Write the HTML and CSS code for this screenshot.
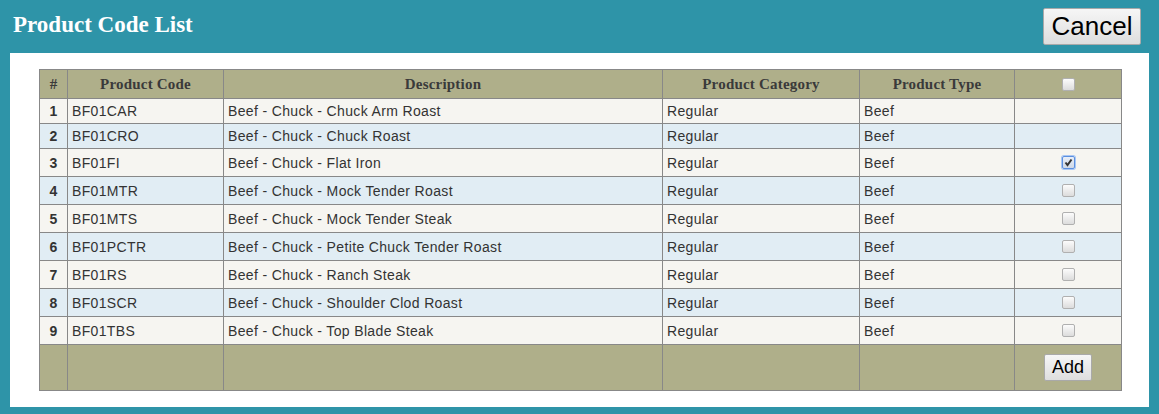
FILE: index.html
```html
<!DOCTYPE html>
<html>
<head>
<meta charset="utf-8">
<link rel="stylesheet" href="styles.css">
</head>
<body>
<div class="topbar">
  <h1 class="title">Product Code List</h1>
  <button class="btn btn-cancel">Cancel</button>
</div>
<div class="panel">
  <table class="grid">
    <colgroup>
      <col class="c-num"><col class="c-code"><col class="c-desc"><col class="c-cat"><col class="c-type"><col class="c-chk">
    </colgroup>
    <thead>
      <tr>
        <th>#</th><th>Product Code</th><th>Description</th><th>Product Category</th><th>Product Type</th><th class="chk"><span class="cb"></span></th>
      </tr>
    </thead>
    <tbody>
      <tr class="odd short"><td class="num">1</td><td>BF01CAR</td><td>Beef - Chuck - Chuck Arm Roast</td><td>Regular</td><td>Beef</td><td></td></tr>
      <tr class="even short"><td class="num">2</td><td>BF01CRO</td><td>Beef - Chuck - Chuck Roast</td><td>Regular</td><td>Beef</td><td></td></tr>
      <tr class="odd"><td class="num">3</td><td>BF01FI</td><td>Beef - Chuck - Flat Iron</td><td>Regular</td><td>Beef</td><td class="chk"><span class="cb checked"><svg viewBox="0 0 13 13" width="13" height="13"><path d="M3.5 6.5 L5.5 9 L9.5 3.5" fill="none" stroke="#333" stroke-width="2"/></svg></span></td></tr>
      <tr class="even"><td class="num">4</td><td>BF01MTR</td><td>Beef - Chuck - Mock Tender Roast</td><td>Regular</td><td>Beef</td><td class="chk"><span class="cb"></span></td></tr>
      <tr class="odd"><td class="num">5</td><td>BF01MTS</td><td>Beef - Chuck - Mock Tender Steak</td><td>Regular</td><td>Beef</td><td class="chk"><span class="cb"></span></td></tr>
      <tr class="even"><td class="num">6</td><td>BF01PCTR</td><td>Beef - Chuck - Petite Chuck Tender Roast</td><td>Regular</td><td>Beef</td><td class="chk"><span class="cb"></span></td></tr>
      <tr class="odd"><td class="num">7</td><td>BF01RS</td><td>Beef - Chuck - Ranch Steak</td><td>Regular</td><td>Beef</td><td class="chk"><span class="cb"></span></td></tr>
      <tr class="even"><td class="num">8</td><td>BF01SCR</td><td>Beef - Chuck - Shoulder Clod Roast</td><td>Regular</td><td>Beef</td><td class="chk"><span class="cb"></span></td></tr>
      <tr class="odd"><td class="num">9</td><td>BF01TBS</td><td>Beef - Chuck - Top Blade Steak</td><td>Regular</td><td>Beef</td><td class="chk"><span class="cb"></span></td></tr>
    </tbody>
    <tfoot>
      <tr><td></td><td></td><td></td><td></td><td></td><td class="chk"><button class="btn btn-add">Add</button></td></tr>
    </tfoot>
  </table>
</div>
</body>
</html>
```
FILE: styles.css
```css
html, body {
  margin: 0;
  padding: 0;
}
body {
  background: #2e94a8;
  font-family: "Liberation Sans", Arial, sans-serif;
  height: 414px;
  overflow: hidden;
}
.topbar {
  height: 53px;
  box-sizing: border-box;
  display: flex;
  justify-content: space-between;
  align-items: flex-start;
  padding: 8px 18px 0 13px;
}
.title {
  margin: 0;
  padding-top: 5px;
  font-family: "Liberation Serif", "Times New Roman", serif;
  font-weight: bold;
  font-size: 23px;
  line-height: 24px;
  color: #ffffff;
}
.btn {
  font-family: "Liberation Sans", Arial, sans-serif;
  color: #000;
  background: linear-gradient(#f6f6f6, #dedede);
  border: 1px solid #a9a9a9;
  border-radius: 2px;
  padding: 0;
  margin: 0;
}
.btn-cancel {
  width: 98px;
  height: 37px;
  font-size: 26px;
}
.btn-add {
  width: 48px;
  height: 27px;
  font-size: 18px;
  vertical-align: middle;
}
.panel {
  background: #ffffff;
  margin: 0 10px;
  height: 354px;
  box-sizing: border-box;
  padding: 16px 0 0 29px;
}
.grid {
  border-collapse: collapse;
  table-layout: fixed;
  width: 1082px;
  font-size: 14px;
  color: #333;
}
.c-num { width: 28px; }
.c-code { width: 156px; }
.c-desc { width: 439px; }
.c-cat { width: 197px; }
.c-type { width: 155px; }
.c-chk { width: 107px; }
.grid th, .grid td {
  border: 1px solid #888888;
  padding: 0 0 0 4px;
  text-align: left;
  white-space: nowrap;
}
.grid tbody td {
  letter-spacing: 0.35px;
}
.grid th {
  background: #afaf8a;
  height: 28px;
  font-family: "Liberation Serif", "Times New Roman", serif;
  font-weight: bold;
  font-size: 15px;
  letter-spacing: 0.2px;
  color: #3a3a3a;
  text-align: center;
  padding: 0;
}
.grid tbody td { height: 27px; }
.grid tbody tr.short td { height: 24px; }
.grid tr.odd td { background: #f6f5f1; }
.grid tr.even td { background: #e1edf4; }
.grid td.num {
  font-weight: bold;
  text-align: center;
  padding: 0;
  letter-spacing: 0;
}
.grid .chk {
  text-align: center;
  padding: 0;
  line-height: 0;
}
.grid tfoot td {
  background: #afaf8a;
  height: 45px;
}
.grid tfoot td.chk { line-height: normal; }
.cb {
  display: block;
  margin: 0 auto;
  width: 11px;
  height: 11px;
  border: 1px solid #b0b0b0;
  border-radius: 2px;
  background: linear-gradient(#fcfcfc, #dcdcdc);
  position: relative;
}
.cb svg {
  position: absolute;
  left: -1px;
  top: -1px;
}
.cb.checked {
  border-color: #5b8fe0;
  box-shadow: 0 0 0 1px #a8c6f3;
  background: linear-gradient(#e8eef8, #cfd8e6);
}
```
